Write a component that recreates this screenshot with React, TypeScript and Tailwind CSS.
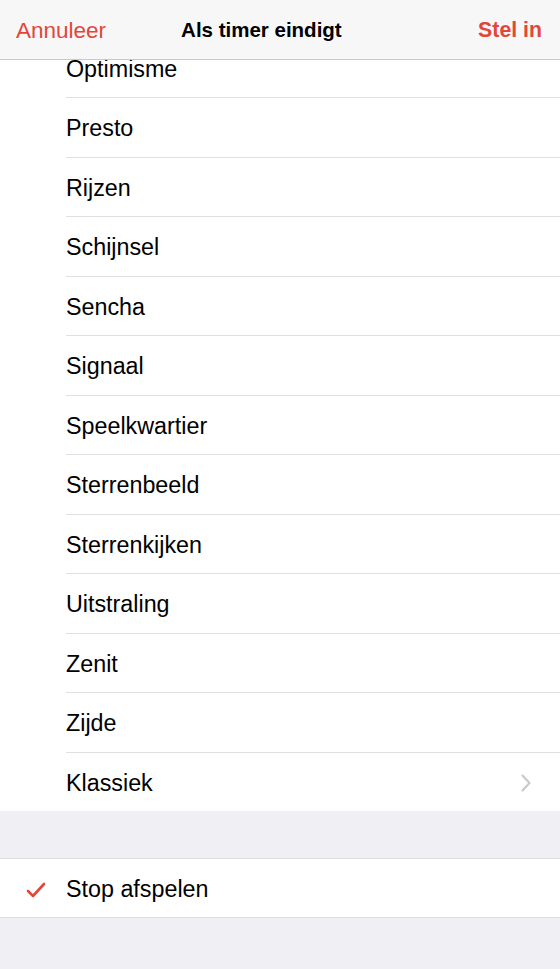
const sounds = [
  "Optimisme",
  "Presto",
  "Rijzen",
  "Schijnsel",
  "Sencha",
  "Signaal",
  "Speelkwartier",
  "Sterrenbeeld",
  "Sterrenkijken",
  "Uitstraling",
  "Zenit",
  "Zijde",
];

export default function App() {
  return (
    <div
      className="h-[969px] w-[560px] overflow-hidden bg-[#efeff4] text-black"
      style={{ fontFamily: '"Liberation Sans", Arial, sans-serif' }}
    >
      {/* nav bar */}
      <div className="flex h-[60px] items-center border-b border-[#c9c9cc] bg-[#f7f7f7] pl-4 pr-[18px] pt-[2px]">
        <span className="text-[22.5px] text-[#e2463a]">Annuleer</span>
        <span className="ml-[75px] text-[20.5px] font-bold">Als timer eindigt</span>
        <span className="ml-auto text-[21.3px] font-bold text-[#e2463a]">Stel in</span>
      </div>

      {/* sound list, scrolled under the nav bar */}
      <div className="h-[751px] overflow-hidden bg-white">
        <div className="-mt-[21.5px]">
          {sounds.map((s) => (
            <div key={s} className="pl-[66px]">
              <div className="flex h-[59.5px] items-center border-b border-[#e0e0e3] pt-[3px] text-[23.3px]">
                {s}
              </div>
            </div>
          ))}
          <div className="flex h-[59.5px] items-center border-b border-[#dcdce0] pl-[66px] pr-[29px] pt-[3px] text-[23.3px]">
            <span>Klassiek</span>
            <svg width="10" height="18" viewBox="0 0 10 18" className="ml-auto">
              <path d="M1.5 1.5 L8.5 9 L1.5 16.5" fill="none" stroke="#c7c7cc" strokeWidth="2" strokeLinecap="round" strokeLinejoin="round" />
            </svg>
          </div>
        </div>
      </div>

      <div className="h-[47px]" />

      <div className="flex h-[60px] items-center border-y border-[#dcdce0] bg-white pt-[3px] text-[23.3px]">
        <svg width="20" height="16" viewBox="0 0 20 16" className="ml-[26px] mr-[20px]">
          <path d="M2 9 L7 14 L18 2" fill="none" stroke="#e2463a" strokeWidth="2.6" strokeLinecap="round" strokeLinejoin="round" />
        </svg>
        <span>Stop afspelen</span>
      </div>
    </div>
  );
}
